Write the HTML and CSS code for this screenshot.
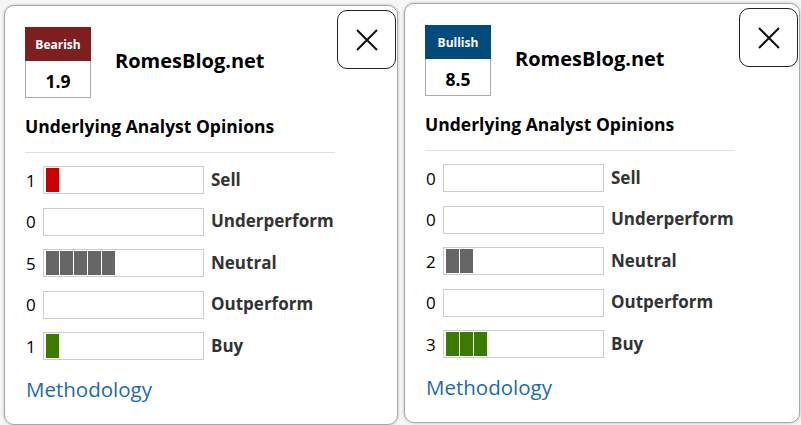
FILE: index.html
```html
<!DOCTYPE html>
<html>
<head>
<meta charset="utf-8">
<link rel="stylesheet" href="styles.css">
</head>
<body>
<div class="stage">
  <div class="card card-left">
    <button class="close" aria-label="Close"><svg width="22" height="22" viewBox="0 0 22 22"><path d="M1 1L21 21M21 1L1 21" stroke="#111" stroke-width="2" fill="none"/></svg></button>
    <div class="head">
      <div class="badge">
        <div class="badge-top bear">Bearish</div>
        <div class="badge-val">1.9</div>
      </div>
      <div class="source">RomesBlog.net</div>
    </div>
    <div class="title">Underlying Analyst Opinions</div>
    <div class="rows">
      <div class="row"><span class="num">1</span><span class="bar"><i class="seg red"></i></span><span class="lab">Sell</span></div>
      <div class="row"><span class="num">0</span><span class="bar"></span><span class="lab">Underperform</span></div>
      <div class="row"><span class="num">5</span><span class="bar"><i class="seg gray"></i><i class="seg gray"></i><i class="seg gray"></i><i class="seg gray"></i><i class="seg gray"></i></span><span class="lab">Neutral</span></div>
      <div class="row"><span class="num">0</span><span class="bar"></span><span class="lab">Outperform</span></div>
      <div class="row"><span class="num">1</span><span class="bar"><i class="seg green"></i></span><span class="lab">Buy</span></div>
    </div>
    <a class="method" href="#">Methodology</a>
  </div>
  <div class="card card-right">
    <button class="close" aria-label="Close"><svg width="22" height="22" viewBox="0 0 22 22"><path d="M1 1L21 21M21 1L1 21" stroke="#111" stroke-width="2" fill="none"/></svg></button>
    <div class="head">
      <div class="badge">
        <div class="badge-top bull">Bullish</div>
        <div class="badge-val">8.5</div>
      </div>
      <div class="source">RomesBlog.net</div>
    </div>
    <div class="title">Underlying Analyst Opinions</div>
    <div class="rows">
      <div class="row"><span class="num">0</span><span class="bar"></span><span class="lab">Sell</span></div>
      <div class="row"><span class="num">0</span><span class="bar"></span><span class="lab">Underperform</span></div>
      <div class="row"><span class="num">2</span><span class="bar"><i class="seg gray"></i><i class="seg gray"></i></span><span class="lab">Neutral</span></div>
      <div class="row"><span class="num">0</span><span class="bar"></span><span class="lab">Outperform</span></div>
      <div class="row"><span class="num">3</span><span class="bar"><i class="seg green"></i><i class="seg green"></i><i class="seg green"></i></span><span class="lab">Buy</span></div>
    </div>
    <a class="method" href="#">Methodology</a>
  </div>
</div>
</body>
</html>
```

FILE: styles.css
```css
html, body {
  margin: 0;
  padding: 0;
  height: 100%;
  overflow: hidden;
}
body {
  background: #f6f6f6;
  font-family: "Open Sans", "Liberation Sans", sans-serif;
  color: #000;
}
.stage {
  display: flex;
  align-items: flex-start;
  gap: 6px;
  padding-left: 4px;
}
.card {
  position: relative;
  box-sizing: border-box;
  width: 394px;
  height: 420px;
  background: #fff;
  border: 1px solid #a8a8a8;
  border-radius: 10px;
  box-shadow: 0 0 3px rgba(0, 0, 0, 0.25);
  padding: 21px 0 0 20px;
}
.card-left { margin-top: 5px; }
.card-right { margin-top: 3px; width: 396px; }
.close {
  position: absolute;
  top: 4px;
  right: 1px;
  width: 59px;
  height: 59px;
  box-sizing: border-box;
  border: 1px solid #222;
  border-radius: 10px;
  background: #fff;
  padding: 0;
  display: flex;
  align-items: center;
  justify-content: center;
}
.head {
  display: flex;
  align-items: center;
  gap: 24px;
}
.badge {
  width: 66px;
  box-sizing: border-box;
  border: 1px solid #aaa;
  display: flex;
  flex-direction: column;
}
.badge-top {
  height: 34px;
  margin: -1px -1px 0;
  display: flex;
  align-items: center;
  justify-content: center;
  color: #fff;
  font-weight: 700;
  font-size: 12px;
}
.bear { background: #7e1f1f; }
.bull { background: #004b7c; }
.badge-val {
  box-sizing: border-box;
  height: 36px;
  padding-top: 4px;
  display: flex;
  align-items: center;
  justify-content: center;
  font-weight: 700;
  font-size: 17.5px;
}
.source {
  font-weight: 700;
  font-size: 20px;
  margin-top: -5px;
}
.title {
  margin-top: 16px;
  font-weight: 700;
  font-size: 17.5px;
  line-height: 24px;
  width: 310px;
  padding-bottom: 14px;
  border-bottom: 1px solid #ddd;
}
.rows {
  margin-top: 13px;
  display: flex;
  flex-direction: column;
  gap: 13.5px;
}
.row {
  display: flex;
  align-items: center;
  height: 28px;
}
.num {
  width: 17px;
  font-size: 17px;
  margin-left: 1px;
}
.bar {
  box-sizing: border-box;
  width: 161px;
  height: 28px;
  border: 1px solid #ccc;
  padding: 1px 2px;
  display: flex;
  gap: 1px;
}
.seg {
  display: block;
  width: 13px;
  height: 24px;
}
.red { background: #cc0000; }
.gray { background: #666; }
.green { background: #3d7a00; }
.lab {
  margin-left: 7px;
  margin-top: -2px;
  font-weight: 700;
  font-size: 17px;
  color: #333;
}
.method {
  display: inline-block;
  margin-top: 16px;
  margin-left: 1px;
  font-size: 20.5px;
  line-height: 26px;
  color: #1e6aa8;
  text-decoration: none;
}
```
